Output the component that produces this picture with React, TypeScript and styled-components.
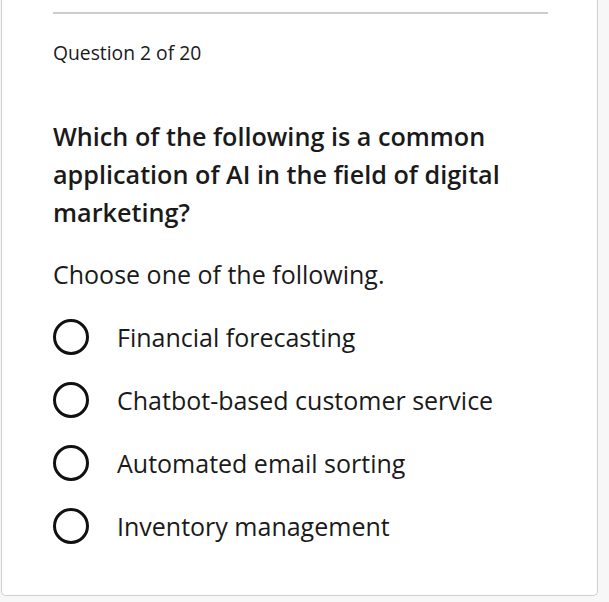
import React from "react";
import styled, { createGlobalStyle } from "styled-components";

const Global = createGlobalStyle`
  html, body { margin: 0; padding: 0; background: #f7f7f7; }
  body { font-family: "Open Sans", "Noto Sans", sans-serif; color: #1a1a1a; }
`;

const Card = styled.div`
  box-sizing: border-box;
  margin-left: 1px;
  width: 597px;
  height: 596px;
  background: #fff;
  border: 1px solid #cfcfcf;
  border-top: none;
  border-radius: 0 0 5px 5px;
  padding: 12px 50px 0 51px;
`;

const Divider = styled.hr`
  margin: 0;
  border: none;
  height: 2px;
  background: #cccccc;
  width: 495px;
`;

const Counter = styled.div`
  margin-top: 26px;
  font-size: 19.3px;
  line-height: 26px;
  color: #1a1a1a;
`;

const Prompt = styled.h2`
  margin: 51px 0 0;
  font-size: 25.2px;
  line-height: 38px;
  font-weight: 600;
  color: #1a1a1a;
  max-width: 480px;
`;

const Hint = styled.p`
  margin: 27px 0 0;
  font-size: 25px;
  line-height: 32px;
  color: #1a1a1a;
`;

const Options = styled.div`
  margin-top: 29px;
  display: flex;
  flex-direction: column;
  gap: 27px;
`;

const Option = styled.label`
  display: flex;
  align-items: center;
  gap: 28px;
  font-size: 25px;
  line-height: 36px;
  color: #1a1a1a;
  cursor: pointer;
`;

const Radio = styled.span`
  box-sizing: border-box;
  width: 36px;
  height: 36px;
  border: 3px solid #111;
  border-radius: 50%;
  flex: none;
`;

const options = [
  "Financial forecasting",
  "Chatbot-based customer service",
  "Automated email sorting",
  "Inventory management",
];

export default function App() {
  return (
    <>
      <Global />
      <Card>
        <Divider />
        <Counter>Question 2 of 20</Counter>
        <Prompt>Which of the following is a common application of AI in the field of digital marketing?</Prompt>
        <Hint>Choose one of the following.</Hint>
        <Options>
          {options.map((o) => (
            <Option key={o}>
              <Radio />
              {o}
            </Option>
          ))}
        </Options>
      </Card>
    </>
  );
}
